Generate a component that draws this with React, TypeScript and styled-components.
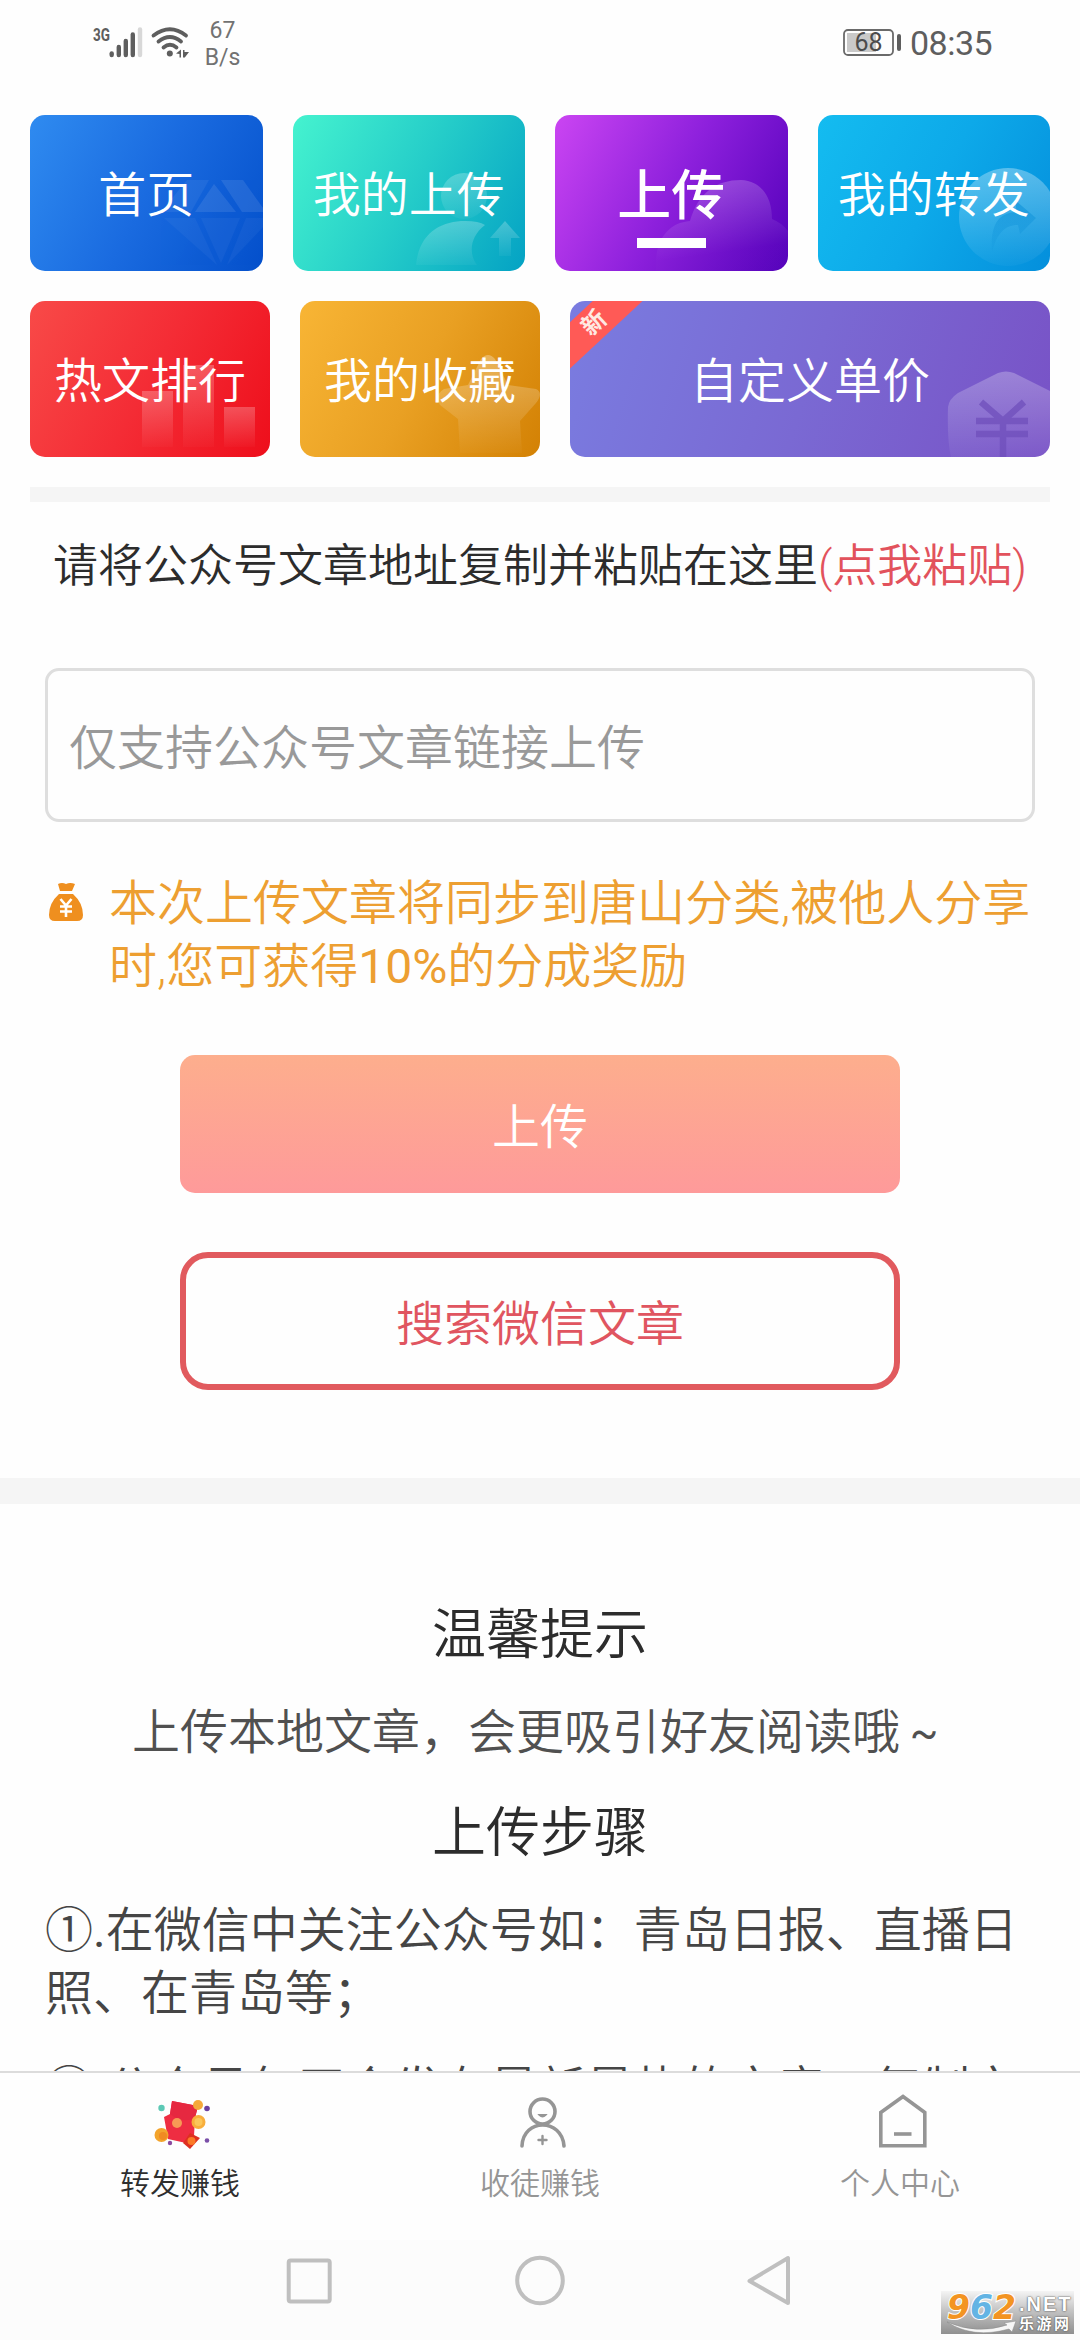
import React from "react";
import styled, { createGlobalStyle, css } from "styled-components";

const GlobalStyle = createGlobalStyle`
  * { box-sizing: border-box; }
  html, body { margin: 0; padding: 0; background: #fefefe; }
  body {
    font-family: Roboto, "Noto Sans CJK SC", sans-serif;
    font-weight: 350;
    color: #333;
  }
  p, h2 { margin: 0; font-weight: inherit; }
  button { border: 0; padding: 0; margin: 0; font: inherit; background: none; }
`;

const Screen = styled.div`
  width: 1080px;
  height: 2340px;
  display: flex;
  flex-direction: column;
  overflow: hidden;
  background: #fefefe;
`;

/* ---------- status bar ---------- */

const StatusBar = styled.header`
  flex: none;
  height: 115px;
  padding: 17px 84px 0 92px;
  display: flex;
  justify-content: space-between;
  align-items: flex-start;
  color: #5e5e5e;
`;

const StatusGroup = styled.div`
  display: flex;
  align-items: flex-start;
`;

const SignalIcon = styled.svg`
  display: block;
  width: 100px;
  height: 50px;
`;

const NetSpeed = styled.div`
  width: 61px;
  display: flex;
  flex-direction: column;
  align-items: center;
  font-size: 23px;
  line-height: 27px;
  font-weight: 400;
  color: #727272;
`;

const BatteryIcon = styled.svg`
  display: block;
  width: 62px;
  height: 50px;
  margin-right: 6px;
`;

const Clock = styled.span`
  font-size: 34px;
  line-height: 52px;
  width: 86px;
  font-weight: 400;
  letter-spacing: -0.5px;
  white-space: nowrap;
`;

/* ---------- menu tiles ---------- */

const Menu = styled.nav`
  flex: none;
  padding: 0 30px;
  display: flex;
  flex-direction: column;
  gap: 30px;
`;

const MenuRow = styled.div<{ $cols: string }>`
  display: grid;
  grid-template-columns: ${(p) => p.$cols};
  gap: 30px;
`;

const Tile = styled.div<{ $bg: string; $active?: boolean }>`
  position: relative;
  height: 156px;
  border-radius: 15px;
  overflow: hidden;
  display: flex;
  flex-direction: column;
  align-items: center;
  justify-content: center;
  padding-top: 6px;
  background: ${(p) => p.$bg};
  color: #fff;
  font-size: 48px;
  line-height: 72px;
  ${(p) =>
    p.$active &&
    css`
      font-size: 54px;
      font-weight: 500;
      padding-top: 23px;
    `}
`;

const TileArt = styled.svg`
  position: absolute;
  right: 0;
  bottom: 0;
  width: 232px;
  height: 156px;
`;

const TileLabel = styled.span`
  position: relative;
  white-space: nowrap;
`;

const TileUnderline = styled.span`
  position: relative;
  width: 69px;
  height: 10px;
  margin-top: 5px;
  background: #fff;
`;

const Ribbon = styled.span`
  position: absolute;
  left: -46px;
  top: 5px;
  width: 140px;
  height: 34px;
  transform: rotate(-43deg);
  background: #ff5a56;
  color: #ffe9e2;
  font-size: 24px;
  line-height: 34px;
  font-weight: 700;
  text-align: center;
`;

/* ---------- upload form ---------- */

const Content = styled.main`
  flex: 1;
  min-height: 0;
  overflow: hidden;
`;

const Divider = styled.div<{ $h: number }>`
  height: ${(p) => p.$h}px;
  background: #f5f5f5;
`;

const Form = styled.section`
  padding: 33px 45px 88px;
  display: flex;
  flex-direction: column;
`;

const Prompt = styled.p`
  font-size: 45px;
  line-height: 64px;
  text-align: center;
  white-space: nowrap;
  color: #2c2c2c;
`;

const PasteLink = styled.span`
  color: #e2525c;
`;

const UrlField = styled.input`
  margin-top: 69px;
  width: 990px;
  height: 154px;
  border: 3px solid #dedede;
  border-radius: 14px;
  background: #fefefe;
  padding: 6px 21px 0;
  font: inherit;
  font-size: 48px;
  outline: none;
  &::placeholder {
    color: #999;
    opacity: 1;
  }
`;

const Notice = styled.div`
  margin-top: 50px;
  display: flex;
  align-items: flex-start;
  color: #ed9f31;
`;

const BagIcon = styled.svg`
  flex: none;
  width: 36px;
  height: 39px;
  margin: 10px 25px 0 3px;
`;

const NoticeText = styled.p`
  font-size: 48px;
  line-height: 63px;
  white-space: nowrap;
`;

const Latin = styled.span`
  font-weight: 400;
`;

const Actions = styled.div`
  margin: 57px auto 0;
  width: 720px;
  display: flex;
  flex-direction: column;
  gap: 59px;
`;

const Button = styled.button<{ $outline?: boolean }>`
  height: 138px;
  padding-bottom: 3px;
  font-size: 48px;
  color: #fff;
  border-radius: 15px;
  background: linear-gradient(#fdae8d, #fe9a9a);
  ${(p) =>
    p.$outline &&
    css`
      color: #e05560;
      border: 6px solid #e15a5e;
      border-radius: 28px;
      background: #fefefe;
    `}
`;

/* ---------- tips ---------- */

const Tips = styled.section`
  padding: 92px 45px 0;
`;

const TipsTitle = styled.h2<{ $top?: number }>`
  margin-top: ${(p) => p.$top || 0}px;
  font-size: 54px;
  line-height: 80px;
  text-align: center;
  color: #2c2c2c;
`;

const TipsLead = styled.p`
  margin-top: 25px;
  display: flex;
  justify-content: center;
  font-size: 48px;
  line-height: 63px;
  color: #505050;
`;

const Tilde = styled.span`
  width: 48px;
  text-align: center;
  font-weight: 400;
  font-size: 42px;
`;

const Steps = styled.div`
  margin-top: 25px;
  display: flex;
  flex-direction: column;
  gap: 33px;
`;

const Step = styled.p`
  font-size: 48px;
  line-height: 63px;
  white-space: nowrap;
  color: #454545;
`;

/* ---------- bottom bars ---------- */

const TabBar = styled.nav`
  flex: none;
  height: 169px;
  border-top: 2px solid #dcdcdc;
  background: #fefefe;
  display: grid;
  grid-template-columns: repeat(3, 1fr);
`;

const Tab = styled.div<{ $active?: boolean }>`
  display: flex;
  flex-direction: column;
  align-items: center;
  padding-top: 19px;
  font-size: 30px;
  line-height: 44px;
  color: ${(p) => (p.$active ? "#2e2e2e" : "#959595")};
  svg {
    display: block;
    width: 60px;
    height: 60px;
    margin-bottom: 10px;
  }
`;

const SystemNav = styled.footer`
  position: relative;
  flex: none;
  height: 100px;
  background: #fcfcfc;
  display: flex;
  justify-content: center;
  gap: 171px;
  padding-top: 10px;
  svg {
    display: block;
    width: 60px;
    height: 60px;
  }
`;

const Watermark = styled.div`
  position: absolute;
  left: 941px;
  top: 51px;
  width: 133px;
  height: 43px;
  display: flex;
  background: linear-gradient(#f4f4f4, #c9c9c9 40%, #8f8f8f);
`;

const WatermarkDigits = styled.div`
  width: 78px;
  height: 43px;
  padding-left: 6px;
  font-family: "DejaVu Sans", sans-serif;
  font-style: italic;
  font-weight: 700;
  font-size: 33px;
  line-height: 33px;
  letter-spacing: 0;
  -webkit-text-stroke: 2px #fff;
  paint-order: stroke fill;
  white-space: nowrap;
`;

const Digit = styled.span<{ $color: string }>`
  color: ${(p) => p.$color};
`;

const WatermarkSite = styled.div`
  display: flex;
  flex-direction: column;
  width: 55px;
  height: 43px;
  color: #fff;
  font-family: "Liberation Sans", "Noto Sans CJK SC", sans-serif;
  font-weight: 700;
  text-shadow: 0 0 2px #555, 0 0 1px #555;
  white-space: nowrap;
`;

const SiteNet = styled.span`
  font-size: 20px;
  line-height: 22px;
  margin-top: 2px;
  letter-spacing: 2px;
`;

const SiteName = styled.span`
  font-size: 15px;
  line-height: 18px;
  letter-spacing: 2.5px;
`;

const SwooshBox = styled.div`
  position: absolute;
  left: 6px;
  top: 29px;
  svg {
    width: 70px;
    height: 14px;
  }
`;

function HomeArt() {
  return (
    <TileArt viewBox="0 0 232 156">
      <g fill="#fff" opacity="0.09">
        <path d="M156 65 L178 65 L160 97 L130 97 Z" opacity="0.6" />
        <path d="M183 69 L205 97 L164 97 Z" />
        <path d="M190 65 L212 65 L232 93 L232 97 L211 97 Z" />
        <path d="M133 103 L164 103 L186 150 Z" opacity="0.4" />
        <path d="M170 103 L209 103 L190 148 Z" opacity="0.4" />
        <path d="M215 103 L232 103 L232 112 L196 150 Z" opacity="0.4" />
      </g>
    </TileArt>
  );
}

function UploadsArt() {
  return (
    <TileArt viewBox="0 0 232 156">
      <defs>
        <linearGradient id="ua" x1="0" y1="0" x2="0" y2="1">
          <stop offset="0" stopColor="#fff" stopOpacity="0.24" />
          <stop offset="1" stopColor="#fff" stopOpacity="0.04" />
        </linearGradient>
      </defs>
      <circle cx="171" cy="81" r="23" fill="url(#ua)" />
      <path d="M123 150 C126 118 148 106 172 106 Q186 106 192 110 C176 122 176 140 184 150 Z" fill="url(#ua)" />
      <path d="M212 106 L227 123 L218 123 L218 141 L206 141 L206 123 L197 123 Z" fill="url(#ua)" />
    </TileArt>
  );
}

function CloudArt() {
  return (
    <TileArt viewBox="0 0 232 156">
      <defs>
        <linearGradient id="ca" x1="0.3" y1="0" x2="0.5" y2="1">
          <stop offset="0" stopColor="#fff" stopOpacity="0.22" />
          <stop offset="0.8" stopColor="#fff" stopOpacity="0.01" />
        </linearGradient>
      </defs>
      <path
        d="M100 156 C98 128 110 108 134 106 C142 78 160 65 185 65 C204 66 216 80 216 104 Q226 108 232 116 L232 156 Z"
        fill="url(#ca)"
      />
    </TileArt>
  );
}

function ForwardArt() {
  return (
    <TileArt viewBox="0 0 232 156">
      <defs>
        <linearGradient id="fa" x1="0" y1="0" x2="0" y2="1">
          <stop offset="0" stopColor="#fff" stopOpacity="0.33" />
          <stop offset="1" stopColor="#fff" stopOpacity="0.03" />
        </linearGradient>
        <linearGradient id="fb" x1="0" y1="0" x2="0" y2="1">
          <stop offset="0" stopColor="#0a8fd8" stopOpacity="0.6" />
          <stop offset="1" stopColor="#0a8fd8" stopOpacity="0.1" />
        </linearGradient>
      </defs>
      <circle cx="190" cy="102" r="49" fill="url(#fa)" />
      <path
        d="M174 138 C172 110 180 98 198 97 L198 86 L218 103 L202 119 L200 110 C186 110 178 120 174 138 Z"
        fill="url(#fb)"
      />
    </TileArt>
  );
}

function RankArt() {
  return (
    <TileArt viewBox="0 0 232 156">
      <defs>
        <linearGradient id="ra" x1="0" y1="0" x2="0" y2="1">
          <stop offset="0" stopColor="#fff" stopOpacity="0.24" />
          <stop offset="1" stopColor="#fff" stopOpacity="0.02" />
        </linearGradient>
      </defs>
      <g fill="url(#ra)">
        <rect x="104" y="90" width="31" height="56" />
        <rect x="145" y="64" width="31" height="82" />
        <rect x="186" y="106" width="31" height="40" />
      </g>
    </TileArt>
  );
}

function StarArt() {
  return (
    <TileArt viewBox="0 0 232 156">
      <defs>
        <linearGradient id="sa" x1="0" y1="0" x2="0" y2="1">
          <stop offset="0" stopColor="#fff" stopOpacity="0.3" />
          <stop offset="1" stopColor="#fff" stopOpacity="0.02" />
        </linearGradient>
      </defs>
      <path
        d="M173 58 Q180 50 187 58 L200 84 L228 88 Q236 92 228 102 L212 120 L214 152 L152 152 L150 118 L132 104 Q126 94 136 88 L160 84 Z"
        fill="url(#sa)"
      />
    </TileArt>
  );
}

function YenArt() {
  return (
    <TileArt viewBox="0 0 232 156">
      <defs>
        <linearGradient id="ya" x1="0" y1="0" x2="0" y2="1">
          <stop offset="0" stopColor="#fff" stopOpacity="0.26" />
          <stop offset="1" stopColor="#fff" stopOpacity="0.04" />
        </linearGradient>
      </defs>
      <path
        d="M180 72 Q188 69 196 72 L232 90 L232 156 L133 156 Q129 140 130 106 Q131 98 140 92 Z"
        fill="url(#ya)"
      />
      <path
        d="M163 101 L185 120 L206 101 M158 120 H210 M158 133 H210 M185 120 V156"
        fill="none"
        stroke="#6f4fbb"
        strokeWidth="6.500"
        opacity="0.75"
      />
    </TileArt>
  );
}

export default function App() {
  return (
    <>
      <GlobalStyle />
      <Screen>
        <StatusBar>
          <StatusGroup>
            <SignalIcon viewBox="92 17 100 50">
              <text x="93" y="41" fontSize="18" fontWeight="700" textLength="17" lengthAdjust="spacingAndGlyphs" fill="#5e5e5e">
                3G
              </text>
              <g stroke="#5e5e5e" strokeWidth="4.4" strokeLinecap="round">
                <path d="M111.7 53.5 V55" />
                <path d="M118.8 47 V55" />
                <path d="M125.8 41 V55" />
                <path d="M132.8 34.500 V55" />
                <path d="M140 29.500 V55" stroke="#d8d8d8" />
              </g>
              <g fill="none" stroke="#5e5e5e" strokeWidth="3.8" strokeLinecap="round">
                <path d="M153.500 35.500 Q170 23 186 35.500" />
                <path d="M158.500 41.500 Q170 32.500 181 41.500" />
                <path d="M163.500 47.500 Q170 42 176.500 47.500" />
              </g>
              <circle cx="169.800" cy="53.500" r="3" fill="#5e5e5e" />
              <path d="M176 53.500 L181 49.500 V57.500 H179.500 V54 Z M183 50 H184.500 V52 L189 52 L184.800 57.500 H183 Z" fill="#5e5e5e" />
            </SignalIcon>
            <NetSpeed>
              <span>67</span>
              <span>B/s</span>
            </NetSpeed>
          </StatusGroup>
          <StatusGroup>
            <BatteryIcon viewBox="840 17 62 50">
              <rect x="842" y="30" width="49" height="25" rx="4" fill="none" stroke="#6a6a6a" strokeWidth="1.8" />
              <rect x="845" y="33" width="29" height="19" fill="#c9c9c9" />
              <rect x="895" y="34" width="4" height="17" rx="2" fill="#5e5e5e" />
              <text x="866.500" y="51" fontSize="25" textAnchor="middle" fontWeight="400" fill="#4c4c4c">
                68
              </text>
            </BatteryIcon>
            <Clock>08:35</Clock>
          </StatusGroup>
        </StatusBar>

        <Content>
          <Menu>
            <MenuRow $cols="repeat(4, 1fr)">
              <Tile $bg="linear-gradient(118deg, #2f8bf0, #1a6be0 50%, #0450cb)">
                <HomeArt />
                <TileLabel>首页</TileLabel>
              </Tile>
              <Tile $bg="linear-gradient(118deg, #45f3cf, #25cdc9 50%, #04a2c4)">
                <UploadsArt />
                <TileLabel>我的上传</TileLabel>
              </Tile>
              <Tile $active $bg="linear-gradient(118deg, #cb45f2, #8d20dc 50%, #5300ba)">
                <CloudArt />
                <TileLabel>上传</TileLabel>
                <TileUnderline />
              </Tile>
              <Tile $bg="linear-gradient(118deg, #14bcf0, #0da9e9 50%, #048fdc)">
                <ForwardArt />
                <TileLabel>我的转发</TileLabel>
              </Tile>
            </MenuRow>
            <MenuRow $cols="1fr 1fr 2fr">
              <Tile $bg="linear-gradient(118deg, #f84a48, #f42c35 50%, #ee0e1b)">
                <RankArt />
                <TileLabel>热文排行</TileLabel>
              </Tile>
              <Tile $bg="linear-gradient(118deg, #f8b535, #e9a023 50%, #d38104)">
                <StarArt />
                <TileLabel>我的收藏</TileLabel>
              </Tile>
              <Tile $bg="linear-gradient(108deg, #7a7ce0, #7a69d3 50%, #7852c6)">
                <YenArt />
                <TileLabel>自定义单价</TileLabel>
                <Ribbon>新</Ribbon>
              </Tile>
            </MenuRow>
            <Divider $h={15} />
          </Menu>

          <Form>
            <Prompt>
              请将公众号文章地址复制并粘贴在这里<PasteLink>(点我粘贴)</PasteLink>
            </Prompt>
            <UrlField placeholder="仅支持公众号文章链接上传" />
            <Notice>
              <BagIcon viewBox="0 0 36 39">
                <path
                  d="M10 2 Q14 0 18 2 Q22 0 27 2 L24 9 H12 Z M11 12 H25 Q35 21 35 33 Q35 39 29 39 H7 Q1 39 1 33 Q1 21 11 12 Z"
                  fill="#ef8f1f"
                />
                <path d="M12.500 17 L18 23.500 L23.500 17 M12 24.500 H24 M12 29.500 H24 M18 23.500 V35" fill="none" stroke="#fff" strokeWidth="2.600" />
              </BagIcon>
              <NoticeText>
                本次上传文章将同步到唐山分类,被他人分享
                <br />
                时,您可获得<Latin>10%</Latin>的分成奖励
              </NoticeText>
            </Notice>
            <Actions>
              <Button>上传</Button>
              <Button $outline>搜索微信文章</Button>
            </Actions>
          </Form>

          <Divider $h={26} />

          <Tips>
            <TipsTitle>温馨提示</TipsTitle>
            <TipsLead>
              上传本地文章，会更吸引好友阅读哦<Tilde>~</Tilde>
            </TipsLead>
            <TipsTitle $top={30}>上传步骤</TipsTitle>
            <Steps>
              <Step>
                ①<Latin>.</Latin>在微信中关注公众号如：青岛日报、直播日
                <br />
                照、在青岛等；
              </Step>
              <Step>
                ②<Latin>.</Latin>公众号每天会发布最新最热的文章，复制文
              </Step>
            </Steps>
          </Tips>
        </Content>

        <TabBar>
          <Tab $active>
            <svg viewBox="150 2092 60 60">
              <path d="M172 2101 L198 2106 L195 2118 L194 2136 L186 2143 L168 2139 L164 2117 L170 2114 Z" fill="#ee2d42" />
              <path d="M172 2101 L198 2106 L195 2118 Q182 2124 170 2114 Z" fill="#e62840" />
              <path d="M190 2133 L200 2138 L190 2149 L183 2143 Z" fill="#dd3020" />
              <circle cx="198" cy="2105" r="5" fill="#f5a93a" />
              <circle cx="198.500" cy="2122" r="7" fill="#f8ae3c" />
              <circle cx="198.500" cy="2122" r="4" fill="#fbc65a" />
              <circle cx="177" cy="2123" r="5" fill="#f79a55" />
              <circle cx="161.500" cy="2135" r="7" fill="#f3a42c" />
              <circle cx="163" cy="2136" r="4" fill="#f08a22" />
              <circle cx="191.500" cy="2141" r="4" fill="#fb7a26" />
              <circle cx="161.500" cy="2108" r="3.200" fill="#5cc9b5" />
              <circle cx="207" cy="2108.500" r="2.800" fill="#6b3fa0" />
              <circle cx="207" cy="2140.500" r="2.300" fill="#7a4fa8" />
              <circle cx="170" cy="2143" r="2.200" fill="#8a4aa0" />
            </svg>
            <span>转发赚钱</span>
          </Tab>
          <Tab>
            <svg viewBox="510 2092 60 60" fill="none" stroke="#959595" strokeWidth="3.600" strokeLinecap="round">
              <circle cx="542.500" cy="2111.500" r="12.500" />
              <path d="M522 2146 C523 2118 562 2118 564 2146" />
              <path d="M538.500 2140 H546.500 M542.500 2136 V2144" strokeWidth="2.400" />
              <path d="M539.500 2115 Q542.500 2118 545.500 2115 Z" strokeWidth="1.800" fill="#959595" />
            </svg>
            <span>收徒赚钱</span>
          </Tab>
          <Tab>
            <svg viewBox="870 2092 60 60" fill="none" stroke="#959595" strokeWidth="3.600">
              <path d="M880.800 2145.800 V2112.500 L903 2096.500 L924.800 2112.500 V2145.800 Z" />
              <path d="M894 2134 H911.500" />
            </svg>
            <span>个人中心</span>
          </Tab>
        </TabBar>

        <SystemNav>
          <svg viewBox="279 2250 60 60" fill="none" stroke="#bfbfbf" strokeWidth="4">
            <rect x="288.700" y="2260.500" width="41" height="41" rx="2" />
          </svg>
          <svg viewBox="510 2250 60 60" fill="none" stroke="#bfbfbf" strokeWidth="4">
            <circle cx="540" cy="2280.500" r="22.800" />
          </svg>
          <svg viewBox="741 2250 60 60" fill="none" stroke="#bfbfbf" strokeWidth="4" strokeLinejoin="round">
            <path d="M788 2258 V2303 L749.500 2281 Z" />
          </svg>
          <Watermark>
            <WatermarkDigits>
              <Digit $color="#f39422">9</Digit>
              <Digit $color="#63b4e4">6</Digit>
              <Digit $color="#f39422">2</Digit>
            </WatermarkDigits>
            <SwooshBox>
              <svg viewBox="0 0 70 14">
                <path d="M0 2 Q30 15 60 5 L57 3 L69 1 L65 12 L62 9 Q26 19 0 2 Z" fill="#f6f6f6" stroke="#8a8a8a" strokeWidth="0.500" />
              </svg>
            </SwooshBox>
            <WatermarkSite>
              <SiteNet>.NET</SiteNet>
              <SiteName>乐游网</SiteName>
            </WatermarkSite>
          </Watermark>
        </SystemNav>
      </Screen>
    </>
  );
}
